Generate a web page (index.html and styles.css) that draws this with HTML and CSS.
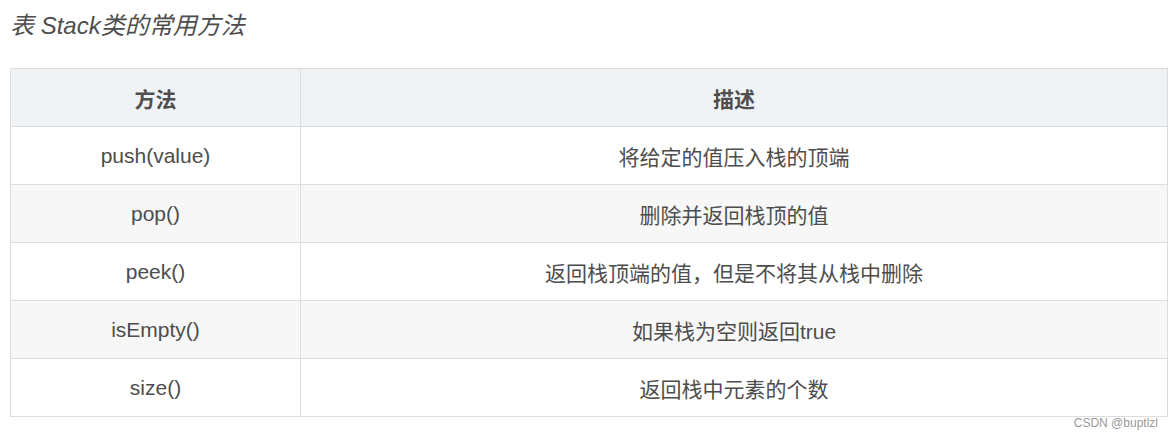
FILE: index.html
```html
<!DOCTYPE html>
<html lang="zh-CN">
<head>
<meta charset="utf-8">
<link rel="stylesheet" href="styles.css">
</head>
<body>
<div class="page">
  <p class="caption">表 Stack类的常用方法</p>
  <table class="tbl">
    <thead>
      <tr><th class="c1">方法</th><th>描述</th></tr>
    </thead>
    <tbody>
      <tr><td>push(value)</td><td>将给定的值压入栈的顶端</td></tr>
      <tr><td>pop()</td><td>删除并返回栈顶的值</td></tr>
      <tr><td>peek()</td><td>返回栈顶端的值，但是不将其从栈中删除</td></tr>
      <tr><td>isEmpty()</td><td>如果栈为空则返回true</td></tr>
      <tr><td>size()</td><td>返回栈中元素的个数</td></tr>
    </tbody>
  </table>
  <div class="mark">CSDN @buptlzl</div>
</div>
</body>
</html>
```

FILE: styles.css
```css
html, body {
  margin: 0;
  padding: 0;
  background: #ffffff;
}
.page {
  padding: 0 6px 0 10px;
  font-family: "Liberation Sans", "Noto Sans CJK SC", sans-serif;
  color: #4d4d4d;
}
.caption {
  margin: 0;
  padding-top: 11px;
  height: 68px;
  box-sizing: border-box;
  font-size: 24px;
  line-height: 30px;
  font-style: italic;
  color: #4d4d4d;
}
.tbl {
  width: 100%;
  border-collapse: collapse;
  font-size: 21px;
}
.tbl th, .tbl td {
  border: 1px solid #dddddd;
  height: 58px;
  padding: 0 8px;
  text-align: center;
  vertical-align: middle;
  box-sizing: border-box;
}
.tbl th {
  background: #eff3f6;
  font-weight: bold;
  font-size: 21px;
  color: #4f4f4f;
}
.tbl .c1 {
  width: 290px;
}
.tbl tbody tr:nth-child(even) td {
  background: #f7f7f7;
}
.mark {
  text-align: right;
  font-size: 12px;
  line-height: 14px;
  color: #999999;
  padding: 0px 10px 0 0;
  margin-top: -1px;
}
```
